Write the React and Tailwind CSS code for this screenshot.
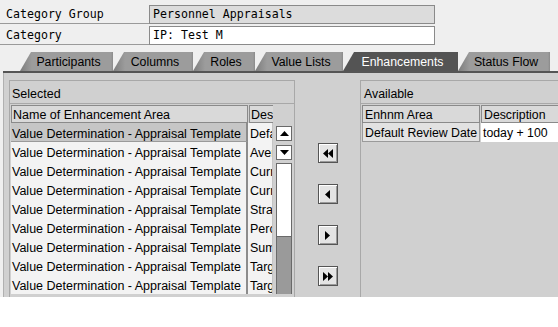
import React from "react";

const rows = [
  "Default Review Date",
  "Average Rating",
  "Current Position",
  "Current Org. Unit",
  "Strategic Objective",
  "Percentage Weight",
  "Summary",
  "Target Value",
  "Target Achievement",
];

const tabs = [
  { label: "Participants", w: "w-[93px]" },
  { label: "Columns", w: "w-[80px]" },
  { label: "Roles", w: "w-[62px]" },
  { label: "Value Lists", w: "w-[88px]" },
  { label: "Enhancements", w: "w-[115px]", active: true },
  { label: "Status Flow", w: "w-[92px]" },
];

function Tri({ dir }) {
  const pts = dir === "left" ? "5,0 5,9 0,4.5" : "0,0 0,9 5,4.5";
  return (
    <svg width="5" height="9" viewBox="0 0 5 9" className="block">
      <polygon points={pts} fill="#000" />
    </svg>
  );
}

function MoveBtn({ kind }) {
  return (
    <div className="w-[20px] h-[20px] border border-[#555] bg-[#e4e4e4] shadow-[inset_1px_1px_0_#fff,inset_-1px_-1px_0_#9a9a9a] flex items-center justify-center">
      {kind === "ll" && (
        <div className="flex">
          <Tri dir="left" />
          <Tri dir="left" />
        </div>
      )}
      {kind === "l" && <Tri dir="left" />}
      {kind === "r" && <Tri dir="right" />}
      {kind === "rr" && (
        <div className="flex">
          <Tri dir="right" />
          <Tri dir="right" />
        </div>
      )}
    </div>
  );
}

function ScrollArrow({ up }) {
  return (
    <div className="w-[16px] h-[15px] border border-[#6a6a6a] bg-white flex items-center justify-center">
      <svg width="9" height="5" viewBox="0 0 9 5">
        <polygon points={up ? "0,5 9,5 4.5,0" : "0,0 9,0 4.5,5"} fill="#000" />
      </svg>
    </div>
  );
}

export default function App() {
  const sans = "font-['Liberation_Sans',Arial,sans-serif]";
  const mono = "font-['DejaVu_Sans_Mono',monospace]";
  return (
    <div className={`w-[558px] h-[327px] bg-white overflow-hidden ${sans} text-[12px] text-black`}>
      <div className="h-[297px] bg-[#efefef] flex flex-col overflow-hidden">
        {/* header fields */}
        <div className={`pt-[5px] ${mono} text-[11.6px]`}>
          <div className="flex h-[19px]">
            <div className="w-[149px] border-b border-[#9a9a9a] pl-[6px] leading-[18px]">Category Group</div>
            <div className="w-[286px] border border-[#8a8a8a] bg-[#dcdcdc] pl-[3px] leading-[17px]">Personnel Appraisals</div>
          </div>
          <div className="flex h-[19px] mt-[2px]">
            <div className="w-[149px] border-b border-[#9a9a9a] pl-[6px] leading-[18px]">Category</div>
            <div className="w-[286px] border border-[#8a8a8a] bg-white pl-[3px] leading-[17px]">IP: Test M</div>
          </div>
        </div>

        {/* tabs */}
        <div className="flex mt-[7px] h-[19px] pl-[20px] text-[12.3px]">
          {tabs.map((t) => (
            <div
              key={t.label}
              className={`${t.w} h-[19px] shrink-0 flex items-center justify-center [clip-path:polygon(11px_0,100%_0,100%_100%,0_100%)] ${
                t.active
                  ? "bg-[#545454] text-white"
                  : "bg-[linear-gradient(to_right,#7c7c7c_0px,#9c9c9c_12px,#9c9c9c_calc(100%-2px),#8a8a8a_100%)] text-black"
              }`}
            >
              <span className="pl-[4px] pt-[1px]">{t.label}</span>
            </div>
          ))}
        </div>
        <div className="ml-[3px] h-[2px] bg-[#555]" />

        {/* panel */}
        <div className="ml-[3px] flex-1 bg-[#d0d0d0] border-l border-[#b0b0b0] pt-[7px] flex overflow-hidden">
          {/* Selected group */}
          <div className="ml-[5px] w-[286px] border border-b-0 border-[#a8a8a8] flex flex-col shrink-0 text-[12.5px]">
            <div className="h-[23px] border-b border-[#a8a8a8] pl-[2px] pt-[4px] leading-[18px]">Selected</div>
            <div className="flex mt-[1px] ml-[1px]">
              <div className="w-[262px] flex flex-col">
                <div className="flex h-[18px]">
                  <div className="w-[237px] border border-[#8a8a8a] bg-[#d9d9d9] pl-[1px] pt-[2px] leading-[14px] whitespace-nowrap overflow-hidden">
                    Name of Enhancement Area
                  </div>
                  <div className="w-[24px] ml-[1px] border border-r-0 border-[#8a8a8a] bg-[#d9d9d9] pl-[1px] pt-[2px] leading-[14px] whitespace-nowrap overflow-hidden">
                    Description
                  </div>
                </div>
                {rows.map((d, i) => (
                  <div key={i} className="flex h-[19px]">
                    <div
                      className={`w-[237px] pl-[1px] pt-[3px] leading-[16px] whitespace-nowrap overflow-hidden border-r-2 border-[#8c8c8c] ${
                        i === 0 ? "bg-[#c6c6c6] border-b border-b-[#9a9a9a]" : "bg-[#f3f3f3]"
                      }`}
                    >
                      Value Determination - Appraisal Template
                    </div>
                    <div className="w-[25px] pl-[2px] pt-[3px] leading-[16px] whitespace-nowrap overflow-hidden bg-[#f3f3f3] border-r border-[#c4c4c4]">
                      {d}
                    </div>
                  </div>
                ))}
              </div>
              <div className="ml-[3px] pt-[21px] w-[16px] flex flex-col">
                <ScrollArrow up />
                <div className="h-[4px]" />
                <ScrollArrow />
                <div className="h-[3px]" />
                <div className="h-[74px] bg-white border border-[#6a6a6a]" />
                <div className="flex-1 bg-[#9a9a9a] border-x border-[#6a6a6a]" />
              </div>
            </div>
          </div>

          {/* move buttons */}
          <div className="w-[65px] shrink-0 flex flex-col items-center pt-[63px] gap-[21px]">
            <MoveBtn kind="ll" />
            <MoveBtn kind="l" />
            <MoveBtn kind="r" />
            <MoveBtn kind="rr" />
          </div>

          {/* Available group */}
          <div className="flex-1 border-l border-t border-[#a8a8a8] flex flex-col text-[12.3px]">
            <div className="h-[23px] border-b border-[#a8a8a8] pl-[3px] pt-[4px] leading-[18px]">Available</div>
            <div className="mt-[1px] ml-[1px] flex flex-col">
              <div className="flex h-[18px]">
                <div className="w-[118px] border border-[#8a8a8a] bg-[#d9d9d9] pl-[2px] pt-[2px] leading-[14px] whitespace-nowrap overflow-hidden">
                  Enhnm Area
                </div>
                <div className="w-[100px] ml-[1px] border border-r-0 border-[#8a8a8a] bg-[#d9d9d9] pl-[2px] pt-[2px] leading-[14px] whitespace-nowrap overflow-hidden">
                  Description
                </div>
              </div>
              <div className="flex h-[19px]">
                <div className="w-[118px] border border-t-0 border-[#9a9a9a] bg-[#e2e2e2] pl-[2px] pt-[2px] leading-[16px] whitespace-nowrap">
                  Default Review Date
                </div>
                <div className="w-[100px] ml-[1px] bg-white pl-[2px] pt-[2px] leading-[16px] whitespace-nowrap">
                  today + 100
                </div>
              </div>
            </div>
          </div>
        </div>
      </div>
    </div>
  );
}
